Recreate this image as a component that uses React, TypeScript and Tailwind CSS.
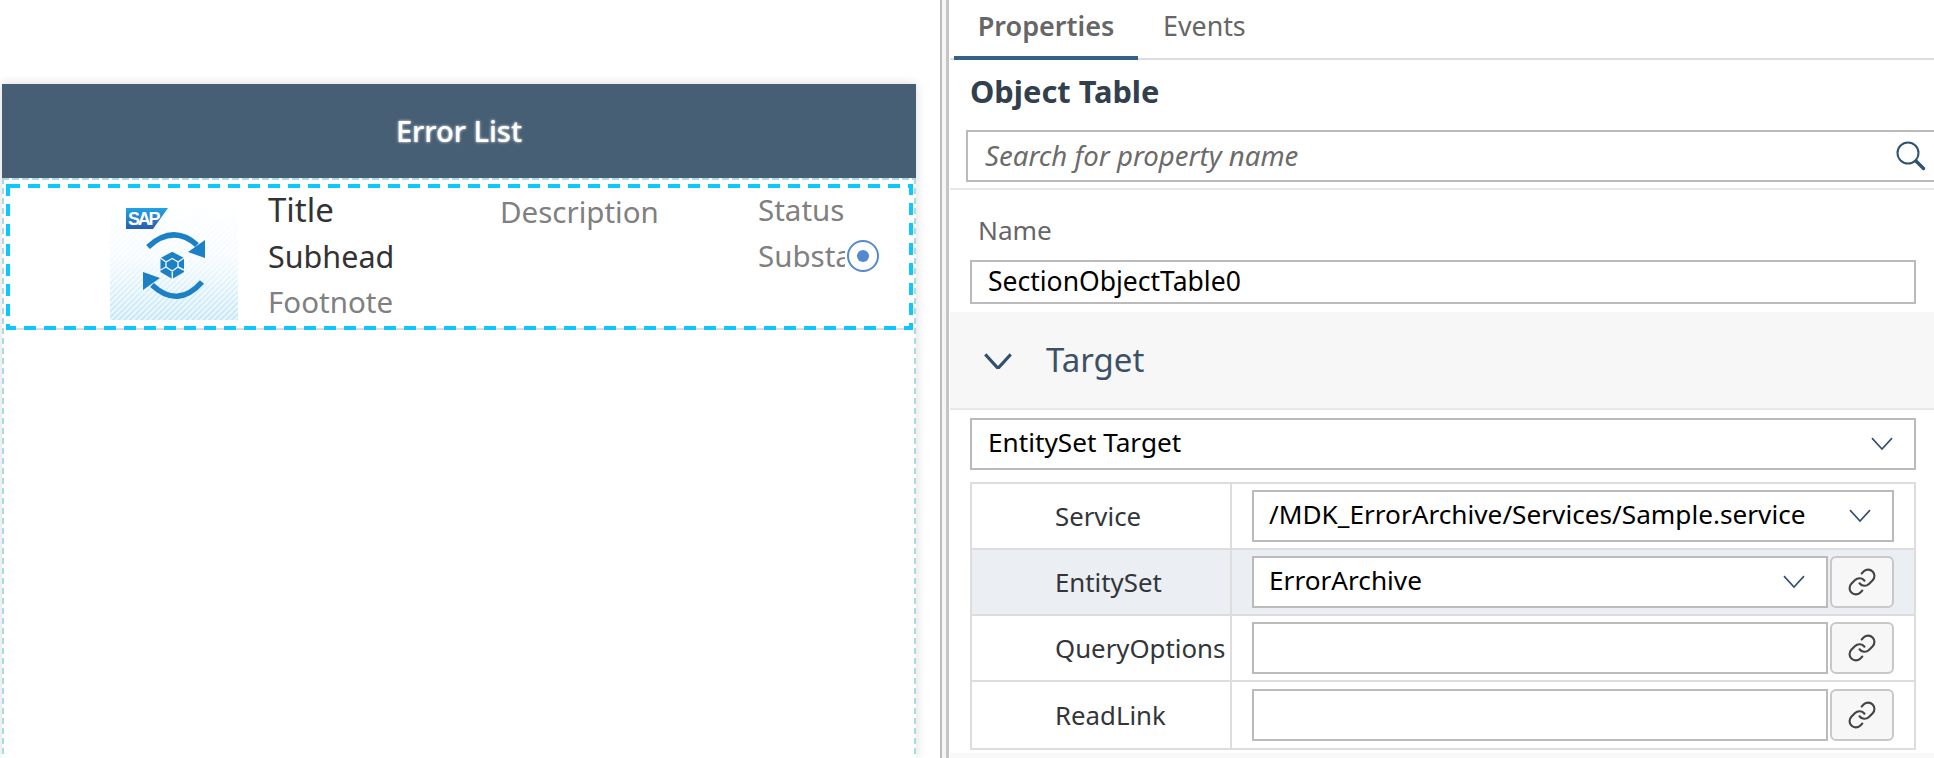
import React from "react";
import { Link as LinkGlyph } from "lucide-react";

const F = "font-['Noto_Sans',sans-serif]";

function Chevron({ w, sw = 1.6, className }: { w: number; sw?: number; className?: string }) {
  return (
    <svg width={w} height={w * 0.6} viewBox="0 0 22 13" className={className} fill="none">
      <path d="M1 1 L11 12 L21 1" stroke="#32506e" strokeWidth={sw} />
    </svg>
  );
}

function LinkButton() {
  return (
    <div className="w-[64px] h-[52px] shrink-0 ml-[2px] rounded-[6px] border-2 border-[#c8c8c8] bg-[#f7f7f7] flex items-center justify-center">
      <LinkGlyph size={30} strokeWidth={1.7} color="#444444" />
    </div>
  );
}

function Row({ label, highlight, last, children }: { label: string; highlight?: boolean; last?: boolean; children: React.ReactNode }) {
  return (
    <div className={`flex h-[66px] ${last ? "" : "border-b-2 border-[#ddd]"} ${highlight ? "bg-[#ebeef2]" : ""}`}>
      <div className="w-[260px] border-r-2 border-[#ddd] pl-[83px] flex items-center text-[25.8px] text-[#32363a] whitespace-nowrap">
        {label}
      </div>
      <div className="flex-1 flex items-center pl-[20px] pr-[20px]">{children}</div>
    </div>
  );
}

function Box({ text, chevron }: { text?: string; chevron?: boolean }) {
  return (
    <div className="flex-1 h-[52px] border-2 border-[#bbb] bg-white flex items-center justify-between pl-[15px] pr-[21px] text-[26.2px] text-black whitespace-nowrap">
      <span className="-mt-[2px]">{text}</span>
      {chevron && <Chevron w={22} />}
    </div>
  );
}

function Thumb() {
  return (
    <svg width="128" height="120" viewBox="0 0 128 120" className="shrink-0">
      <defs>
        <linearGradient id="fade" x1="0" y1="0" x2="0" y2="1">
          <stop offset="0" stopColor="#ffffff" />
          <stop offset="0.5" stopColor="#f3fafe" />
          <stop offset="1" stopColor="#c4e6f7" />
        </linearGradient>
        <linearGradient id="sap" x1="0" y1="0" x2="0" y2="1">
          <stop offset="0" stopColor="#1fa5e3" />
          <stop offset="1" stopColor="#2a5cb0" />
        </linearGradient>
        <pattern id="hatch" width="4" height="4" patternUnits="userSpaceOnUse" patternTransform="rotate(45)">
          <rect width="2" height="4" fill="#ffffff" fillOpacity="0.65" />
        </pattern>
      </defs>
      <rect width="128" height="120" fill="url(#fade)" />
      <rect width="128" height="120" fill="url(#hatch)" />
      <path d="M16 8 H58 L43 29 H16 Z" fill="url(#sap)" />
      <text x="18" y="25" fontFamily="'Liberation Sans',sans-serif" fontWeight="700" fontSize="18" letterSpacing="-2.2" fill="#ffffff">SAP</text>
      <g stroke="#1b80c4" strokeWidth="5.5" fill="none">
        <path d="M38 47 Q63 24 87 45" />
        <path d="M92 82 Q68 109 42 85" />
      </g>
      <path d="M95 40 V58 L78 52 Z" fill="#1b80c4" />
      <path d="M33 72 V90 L50 78 Z" fill="#1b80c4" />
      <path d="M62.3 51.7 L74 58 V72 L62.3 79 L50.5 72 V58 Z" fill="#1b80c4" />
      <path d="M50.5 58 L56 62 L62.3 58.5 L68 62 L74 58 M56 62 V67 L62.3 71 L68 67 V62 M50.5 70 L56 67 M74 70 L68 67 M62.3 71 V79" stroke="#eef8fd" strokeWidth="1.4" fill="none" />
    </svg>
  );
}

export default function App() {
  return (
    <div className={`${F} h-[758px] w-[1934px] overflow-hidden bg-white flex`}>
      <div className="w-[940px] shrink-0 pt-[84px] pl-[2px]">
        <div className="w-[914px] h-[674px] flex flex-col shadow-[0_0_10px_rgba(0,0,0,0.15)]">
          <div className="h-[94px] shrink-0 bg-[#475f74] flex items-center justify-center text-white text-[29px] font-medium [text-shadow:0_0_3px_rgba(255,255,255,0.95)]">
            Error List
          </div>
          <div className="relative flex-1 bg-white pt-[6px] pl-[4px]">
            <svg className="absolute inset-0 w-full h-full pointer-events-none" fill="none">
              <path d="M1 0 V580 M913 0 V580" stroke="#a8dbe6" strokeWidth="2" strokeDasharray="6 4" />
              <path d="M0 1 H914" stroke="#a8dbe6" strokeWidth="2" strokeDasharray="7 3" />
            </svg>
            <div className="relative w-[907px] h-[146px] flex">
              <svg className="absolute inset-0 w-full h-full pointer-events-none" fill="none">
                <path d="M0 145 H907" stroke="#dddddd" strokeWidth="2" />
                <rect x="2" y="2" width="903" height="142" stroke="#0cc8ff" strokeWidth="4" strokeDasharray="12 8" />
              </svg>
              <div className="ml-[104px] mt-[16px]"><Thumb /></div>
              <div className="ml-[30px] w-[232px] pt-[3px] flex flex-col leading-[46px]">
                <span className="text-[33px] text-[#333]">Title</span>
                <span className="text-[30.5px] text-[#333]">Subhead</span>
                <span className="text-[29.5px] text-[#808080]">Footnote</span>
              </div>
              <div className="w-[258px] pt-[6px] text-[29.5px] leading-[44px] text-[#808080]">Description</div>
              <div className="w-[87px] pt-[3px] overflow-hidden text-[29.5px] leading-[46px] text-[#808080] whitespace-nowrap flex flex-col">
                <span>Status</span>
                <span>Substatus</span>
              </div>
              <div className="absolute left-[841px] top-[56px] w-[32px] h-[32px] rounded-full border-2 border-[#5289d1] flex items-center justify-center">
                <div className="w-[12px] h-[12px] rounded-full bg-[#5289d1]" />
              </div>
            </div>
          </div>
        </div>
      </div>
      <div className="w-[2px] bg-[#bbb] shrink-0" />
      <div className="w-[4px] bg-[#f5f5f5] shrink-0" />
      <div className="w-[3px] bg-[#c4c4c4] shrink-0" />
      <div className="w-[1px] shrink-0" />
      <div className="flex-1 flex flex-col">
        <div className="h-[60px] shrink-0 border-b-2 border-[#dcdde0] pl-[4px] flex">
          <div className="w-[184px] h-[60px] border-b-4 border-[#346187] flex justify-center pt-[6px] text-[27px] font-semibold text-[#666]">Properties</div>
          <div className="ml-[25px] pt-[6px] text-[26.8px] text-[#666]">Events</div>
        </div>
        <div className="pl-[20px] h-[70px] pb-[8px] flex items-center text-[30.8px] font-bold text-[#32404d]">Object Table</div>
        <div className="ml-[16px] h-[52px] shrink-0 border-2 border-r-0 border-[#bbb] flex items-center justify-between pl-[17px] pr-[8px]">
          <span className="italic text-[27.6px] text-[#6b6b6b]">Search for property name</span>
          <svg width="30" height="30" viewBox="0 0 30 30" fill="none">
            <circle cx="12" cy="12" r="10.5" stroke="#2f5373" strokeWidth="2" />
            <path d="M20 20 L27.5 27.5" stroke="#2f5373" strokeWidth="3.4" strokeLinecap="round" />
          </svg>
        </div>
        <div className="h-[2px] mt-[6px] shrink-0 bg-[#e8e8e8]" />
        <div className="ml-[28px] h-[70px] shrink-0 flex items-center pt-[12px] text-[26.2px] text-[#666]">Name</div>
        <div className="ml-[20px] mr-[18px] h-[44px] shrink-0 border-2 border-[#bbb] flex items-center pl-[16px] text-[26.5px] text-black">SectionObjectTable0</div>
        <div className="mt-[8px] h-[98px] shrink-0 bg-[#f7f7f7] border-b-2 border-[#e8e8e8] flex items-center pl-[34px]">
          <Chevron w={28} sw={2.4} className="mt-[2px]" />
          <span className="ml-[34px] text-[33px] text-[#3d5166]">Target</span>
        </div>
        <div className="ml-[20px] mr-[18px] mt-[8px] h-[52px] shrink-0">
          <div className="h-full border-2 border-[#bbb] flex items-center justify-between pl-[16px] pr-[21px] text-[26.2px] text-black">
            <span className="-mt-[2px]">EntitySet Target</span>
            <Chevron w={22} />
          </div>
        </div>
        <div className="ml-[20px] mr-[18px] mt-[12px] shrink-0 border-2 border-[#ddd]">
          <Row label="Service">
            <Box text="/MDK_ErrorArchive/Services/Sample.service" chevron />
          </Row>
          <Row label="EntitySet" highlight>
            <Box text="ErrorArchive" chevron />
            <LinkButton />
          </Row>
          <Row label="QueryOptions">
            <Box />
            <LinkButton />
          </Row>
          <Row label="ReadLink" last>
            <Box />
            <LinkButton />
          </Row>
        </div>
        <div className="flex-1 mt-[3px] bg-[#f8f8f8]" />
      </div>
    </div>
  );
}
